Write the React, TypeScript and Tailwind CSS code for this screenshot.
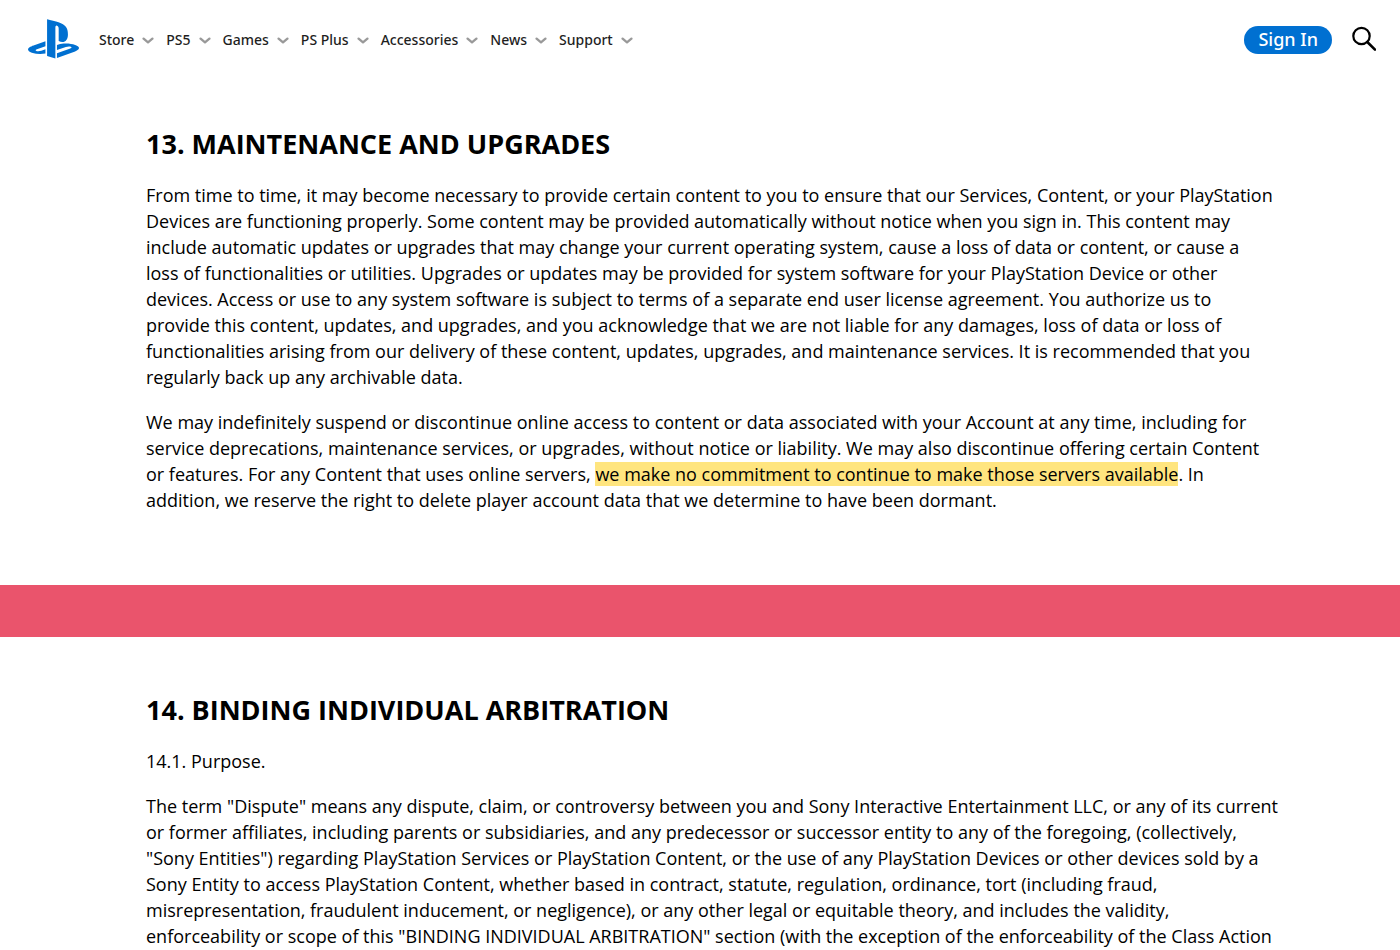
import React from 'react';
import { FaPlaystation } from 'react-icons/fa';

const navItems = ['Store', 'PS5', 'Games', 'PS Plus', 'Accessories', 'News', 'Support'];

const Chevron: React.FC = () => (
  <svg className="w-3 h-3" viewBox="0 0 12 12" fill="none" aria-hidden="true">
    <path d="M1.6 4.6 6 8.4l4.4-3.8" stroke="#999999" strokeWidth="2.3" strokeLinecap="round" strokeLinejoin="round" />
  </svg>
);

const Header: React.FC = () => {
  return (
    <header className="flex items-center justify-between h-20 pl-7 pr-6">
      <div className="flex items-center">
        <a href="#" aria-label="PlayStation" className="mr-5 pb-0.5 text-[#0070d1]">
          <FaPlaystation className="w-[51px] h-[46px]" />
        </a>
        <nav className="flex items-center gap-3">
          {navItems.map((item) => (
            <button key={item} className="flex items-center gap-2 text-sm font-medium text-[#1f1f1f]">
              {item}
              <Chevron />
            </button>
          ))}
        </nav>
      </div>

      <div className="flex items-center gap-5">
        <button className="h-7 px-3.5 pb-0.5 rounded-full bg-[#0070d1] text-white text-lg font-medium leading-none">
          Sign In
        </button>
        <button aria-label="Search">
          <svg className="w-6 h-7" viewBox="0 0 24 28" fill="none" stroke="#000000" aria-hidden="true">
            <circle cx="9.5" cy="10" r="8.2" strokeWidth="2.2" />
            <path d="M15.3 16 23 23.7" strokeWidth="2.6" strokeLinecap="round" />
          </svg>
        </button>
      </div>
    </header>
  );
};

type SectionProps = {
  title: string;
  children: React.ReactNode;
};

const Section: React.FC<SectionProps> = ({ title, children }) => (
  <section className="w-full max-w-[1160px] mx-auto pl-[26px] font-['Open_Sans',sans-serif]">
    <h2 className="mb-5 text-[27px] leading-9 font-bold">{title}</h2>
    <div className="flex flex-col gap-[19px] text-lg leading-[26px]">{children}</div>
  </section>
);

const App: React.FC = () => {
  return (
    <div className="min-h-screen bg-white text-black font-['Noto_Sans',sans-serif]">
      <Header />

      <main>
        <div className="pt-[46px] pb-[72px]">
          <Section title="13. MAINTENANCE AND UPGRADES">
            <p>
              From time to time, it may become necessary to provide certain content to you to ensure that our Services, Content, or your PlayStation<br />
              Devices are functioning properly. Some content may be provided automatically without notice when you sign in. This content may<br />
              include automatic updates or upgrades that may change your current operating system, cause a loss of data or content, or cause a<br />
              loss of functionalities or utilities. Upgrades or updates may be provided for system software for your PlayStation Device or other<br />
              devices. Access or use to any system software is subject to terms of a separate end user license agreement. You authorize us to<br />
              provide this content, updates, and upgrades, and you acknowledge that we are not liable for any damages, loss of data or loss of<br />
              functionalities arising from our delivery of these content, updates, upgrades, and maintenance services. It is recommended that you<br />
              regularly back up any archivable data.
            </p>
            <p>
              We may indefinitely suspend or discontinue online access to content or data associated with your Account at any time, including for<br />
              service deprecations, maintenance services, or upgrades, without notice or liability. We may also discontinue offering certain Content<br />
              or features. For any Content that uses online servers,{' '}
              <mark className="bg-[#ffe57f] text-black">we make no commitment to continue to make those servers available</mark>. In<br />
              addition, we reserve the right to delete player account data that we determine to have been dormant.
            </p>
          </Section>
        </div>

        <div className="h-[52px] bg-[#ea546c]" />

        <div className="pt-[55px]">
          <Section title="14. BINDING INDIVIDUAL ARBITRATION">
            <p>14.1. Purpose.</p>
            <p>
              The term "Dispute" means any dispute, claim, or controversy between you and Sony Interactive Entertainment LLC, or any of its current<br />
              or former affiliates, including parents or subsidiaries, and any predecessor or successor entity to any of the foregoing, (collectively,<br />
              "Sony Entities") regarding PlayStation Services or PlayStation Content, or the use of any PlayStation Devices or other devices sold by a<br />
              Sony Entity to access PlayStation Content, whether based in contract, statute, regulation, ordinance, tort (including fraud,<br />
              misrepresentation, fraudulent inducement, or negligence), or any other legal or equitable theory, and includes the validity,<br />
              enforceability or scope of this "BINDING INDIVIDUAL ARBITRATION" section (with the exception of the enforceability of the Class Action
            </p>
          </Section>
        </div>
      </main>
    </div>
  );
};

export default App;
